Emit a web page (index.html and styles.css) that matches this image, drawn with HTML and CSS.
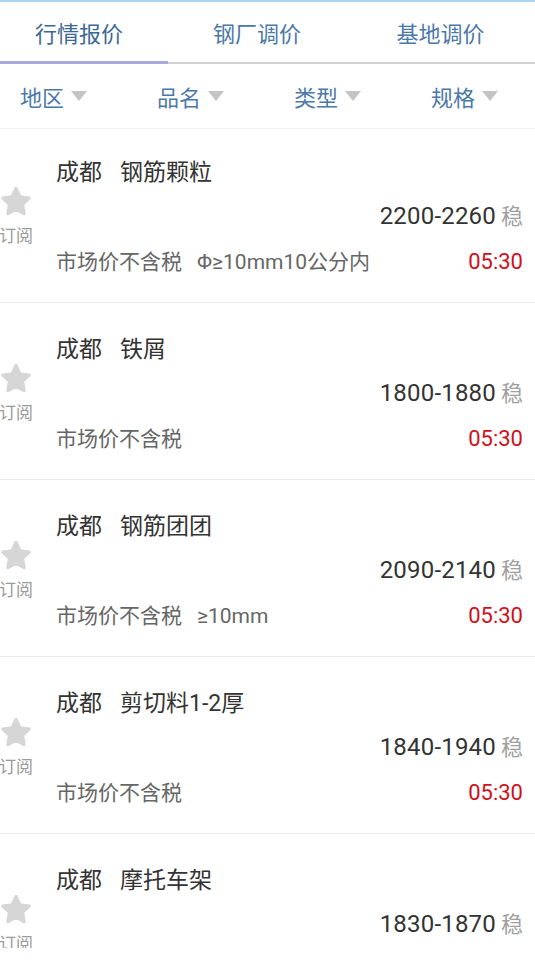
FILE: index.html
```html
<!DOCTYPE html>
<html lang="zh-CN">
<head>
  <meta charset="UTF-8">
  <meta name="viewport" content="width=device-width, initial-scale=1.0">
  <title>行情报价</title>
  <link rel="stylesheet" href="styles.css">
</head>
<body>
  <!-- Top Tabs -->
  <nav class="tabs">
    <div class="tab active">行情报价</div>
    <div class="tab">钢厂调价</div>
    <div class="tab">基地调价</div>
  </nav>

  <!-- Filters -->
  <div class="filters">
    <div class="filter">地区<span class="caret"></span></div>
    <div class="filter">品名<span class="caret"></span></div>
    <div class="filter">类型<span class="caret"></span></div>
    <div class="filter">规格<span class="caret"></span></div>
  </div>

  <!-- Price List -->
  <main class="list">
    <div class="item">
      <div class="sub">
        <svg class="star" viewBox="0 0 24 24"><path d="M12 3l2.7 5.6 6.1.8-4.5 4.2 1.1 6.1L12 16.8l-5.4 2.9 1.1-6.1-4.5-4.2 6.1-.8z"/></svg>
        <span>订阅</span>
      </div>
      <div class="info">
        <div class="title">成都<span class="name">钢筋颗粒</span></div>
        <div class="price">2200-2260<span class="trend">稳</span></div>
        <div class="meta">
          <span>市场价不含税<span class="spec">Φ≥10mm10公分内</span></span>
          <span class="time">05:30</span>
        </div>
      </div>
    </div>

    <div class="item">
      <div class="sub">
        <svg class="star" viewBox="0 0 24 24"><path d="M12 3l2.7 5.6 6.1.8-4.5 4.2 1.1 6.1L12 16.8l-5.4 2.9 1.1-6.1-4.5-4.2 6.1-.8z"/></svg>
        <span>订阅</span>
      </div>
      <div class="info">
        <div class="title">成都<span class="name">铁屑</span></div>
        <div class="price">1800-1880<span class="trend">稳</span></div>
        <div class="meta">
          <span>市场价不含税</span>
          <span class="time">05:30</span>
        </div>
      </div>
    </div>

    <div class="item">
      <div class="sub">
        <svg class="star" viewBox="0 0 24 24"><path d="M12 3l2.7 5.6 6.1.8-4.5 4.2 1.1 6.1L12 16.8l-5.4 2.9 1.1-6.1-4.5-4.2 6.1-.8z"/></svg>
        <span>订阅</span>
      </div>
      <div class="info">
        <div class="title">成都<span class="name">钢筋团团</span></div>
        <div class="price">2090-2140<span class="trend">稳</span></div>
        <div class="meta">
          <span>市场价不含税<span class="spec">≥10mm</span></span>
          <span class="time">05:30</span>
        </div>
      </div>
    </div>

    <div class="item">
      <div class="sub">
        <svg class="star" viewBox="0 0 24 24"><path d="M12 3l2.7 5.6 6.1.8-4.5 4.2 1.1 6.1L12 16.8l-5.4 2.9 1.1-6.1-4.5-4.2 6.1-.8z"/></svg>
        <span>订阅</span>
      </div>
      <div class="info">
        <div class="title">成都<span class="name">剪切料1-2厚</span></div>
        <div class="price">1840-1940<span class="trend">稳</span></div>
        <div class="meta">
          <span>市场价不含税</span>
          <span class="time">05:30</span>
        </div>
      </div>
    </div>

    <div class="item">
      <div class="sub">
        <svg class="star" viewBox="0 0 24 24"><path d="M12 3l2.7 5.6 6.1.8-4.5 4.2 1.1 6.1L12 16.8l-5.4 2.9 1.1-6.1-4.5-4.2 6.1-.8z"/></svg>
        <span>订阅</span>
      </div>
      <div class="info">
        <div class="title">成都<span class="name">摩托车架</span></div>
        <div class="price">1830-1870<span class="trend">稳</span></div>
      </div>
    </div>
  </main>

  <footer class="bottom"></footer>
</body>
</html>
```

FILE: styles.css
```css
/* General Styles */
body {
  font-family: Roboto, "Noto Sans CJK SC", sans-serif;
  margin: 0;
  padding: 0;
  background-color: #fff;
  color: #333;
  overflow: hidden;
}

/* Tabs */
.tabs {
  display: flex;
  height: 60px;
  margin-left: -10px;
  border-top: 2px solid #a9d3f7;
  border-bottom: 2px solid #cfcfd4;
}

.tab {
  width: 178px;
  display: flex;
  align-items: center;
  justify-content: center;
  font-size: 22px;
  color: #4a78a8;
  border-bottom: 3px solid transparent;
  margin-bottom: -2px;
}

.tab:last-child {
  flex: 1;
}

.tab.active {
  color: #3b6898;
  border-bottom-color: #aaa8dc;
}

/* Filters */
.filters {
  display: flex;
  height: 64px;
  padding-left: 20px;
  border-bottom: 1px solid #eeeeee;
}

.filter {
  flex: none;
  width: 137px;
  display: flex;
  align-items: center;
  font-size: 22px;
  color: #4b79a9;
}

.filter:last-child {
  width: auto;
}

.caret {
  margin-left: 7px;
  width: 0;
  height: 0;
  border-left: 8px solid transparent;
  border-right: 8px solid transparent;
  border-top: 10px solid #c4c4c4;
}

/* List */
.list {
  height: 819px;
  overflow: hidden;
}

.item {
  display: flex;
  height: 176px;
  border-bottom: 1px solid #ededed;
}

.item:first-child {
  margin-top: -3px;
}

.sub {
  width: 52px;
  margin-left: -10px;
  display: flex;
  flex-direction: column;
  align-items: center;
  justify-content: center;
  padding-top: 2px;
  font-size: 17px;
  color: #9a9a9a;
}

.star {
  width: 36px;
  height: 36px;
  fill: #d6d6d6;
  stroke: #d6d6d6;
  stroke-width: 2.2;
  stroke-linejoin: round;
  margin-bottom: 2px;
}

.info {
  flex: 1;
  padding: 34px 12px 0 14px;
}

.title {
  height: 26px;
  line-height: 26px;
  font-size: 23px;
  color: #333;
}

.name {
  margin-left: 18px;
}

.price {
  margin-top: 17px;
  height: 26px;
  line-height: 26px;
  text-align: right;
  font-size: 24px;
  letter-spacing: 0.2px;
  color: #333;
}

.trend {
  margin-left: 5px;
  font-size: 22px;
  letter-spacing: 0;
  color: #a0a0a0;
}

.meta {
  margin-top: 20px;
  height: 26px;
  line-height: 26px;
  display: flex;
  justify-content: space-between;
  font-size: 21px;
  color: #666;
}

.spec {
  margin-left: 15px;
}

.time {
  font-size: 22px;
  color: #d0101c;
}

.bottom {
  height: 25px;
  background-color: #fff;
}
```
